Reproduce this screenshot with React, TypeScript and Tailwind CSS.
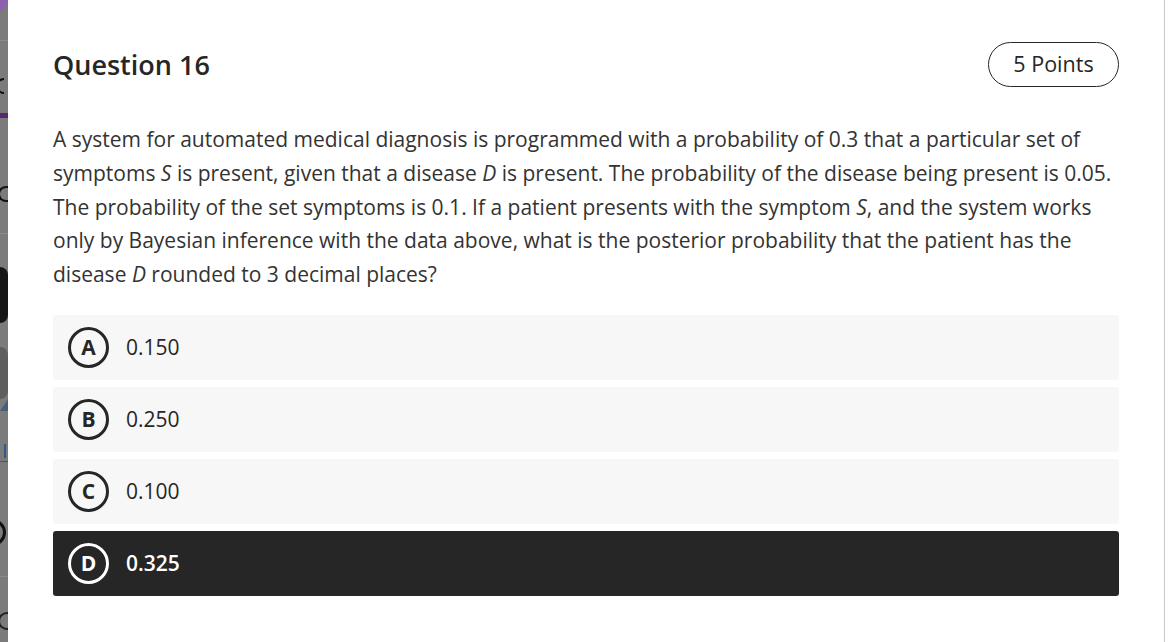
import React from "react";

const font = { fontFamily: '"Open Sans", "Noto Sans", sans-serif' };

function Option({ letter, value, selected }: { letter: string; value: string; selected?: boolean }) {
  return (
    <div
      className={
        "flex h-[65px] items-center rounded-[3px] pl-[15px] " +
        (selected ? "bg-[#262626] text-white" : "bg-[#f7f7f7] text-[#262626]")
      }
    >
      <div
        className={
          "flex h-[41px] w-[41px] items-center justify-center rounded-full border-[3px] text-[21px] font-bold leading-none " +
          (selected ? "border-white" : "border-[#262626]")
        }
      >
        {letter}
      </div>
      <div className={"ml-[17px] text-[21px] " + (selected ? "font-semibold" : "")}>{value}</div>
    </div>
  );
}

function LeftStrip() {
  return (
    <div className="flex h-[642px] w-[8px] shrink-0 flex-col overflow-hidden bg-[#7b7b7b]" style={font}>
      <div className="h-[14px] w-[8px] bg-[linear-gradient(135deg,#8f5fb0_55%,#7b7b7b_55%)]" />
      <div className="h-[26px]" />
      <div className="h-px bg-[#8a8a8a]" />
      <div className="h-[37px]" />
      <div className="h-[16px] w-[8px] overflow-hidden">
        <div className="ml-[-4px] h-[16px] w-[8px] rounded-l-full border-[2px] border-r-0 border-[#111]" />
      </div>
      <div className="h-[19px]" />
      <div className="h-[5px] bg-[#552a6c]" />
      <div className="h-[68px]" />
      <div className="h-[16px] w-[8px] overflow-hidden">
        <div className="ml-[-2px] h-[16px] w-[10px] rounded-l-full border-[2px] border-r-0 border-[#111]" />
      </div>
      <div className="h-[31px]" />
      <div className="h-px bg-[#8a8a8a]" />
      <div className="h-[33px]" />
      <div className="h-[56px] w-[8px] rounded-r-full bg-[#161616]" />
      <div className="h-[24px]" />
      <div className="h-[52px] w-[8px] rounded-r-full bg-[#5e5e5e]" />
      <div className="h-[12px] w-[8px] bg-[#48607e] [clip-path:polygon(0_100%,100%_0,100%_100%)]" />
      <div className="h-[33px]" />
      <div className="h-[18px] border-b border-[#2d5b8a]">
        <div className="ml-[4px] h-[14px] w-[2px] bg-[#2d5b8a]" />
      </div>
      <div className="h-[57px]" />
      <div className="h-[27px] w-[8px] overflow-hidden">
        <div className="ml-[-10px] h-[27px] w-[16px] rounded-r-full border-[3px] border-l-0 border-[#111]" />
      </div>
      <div className="h-[30px]" />
      <div className="h-px bg-[#8a8a8a]" />
      <div className="h-[35px]" />
      <div className="h-[18px] w-[8px] overflow-hidden">
        <div className="ml-[-2px] h-[18px] w-[10px] rounded-l-full border-[2px] border-r-0 border-[#222]" />
      </div>
    </div>
  );
}

export default function App() {
  return (
    <div className="flex h-[642px] w-[1171px] overflow-hidden bg-white" style={font}>
      <LeftStrip />
      <div className="flex-1 border-r border-[#c8c8c8] pl-[45px] pr-[45px] pt-[42px] text-[#262626]">
        <div className="flex items-center justify-between">
          <h1 className="text-[27px] font-semibold leading-none">Question 16</h1>
          <div className="flex h-[45px] w-[131px] items-center justify-center rounded-full border border-[#262626] text-[21.5px]">
            5 Points
          </div>
        </div>
        <p className="mt-[36px] text-[21px] leading-[33.8px] text-[#333]">
          A system for automated medical diagnosis is programmed with a probability of 0.3 that a particular set of
          symptoms <i>S</i> is present, given that a disease <i>D</i> is present. The probability of the disease being
          present is 0.05. The probability of the set symptoms is 0.1. If a patient presents with the symptom <i>S</i>,
          and the system works only by Bayesian inference with the data above, what is the posterior probability that
          the patient has the disease <i>D</i> rounded to 3 decimal places?
        </p>
        <div className="mt-[23px] flex flex-col gap-[7px]">
          <Option letter="A" value="0.150" />
          <Option letter="B" value="0.250" />
          <Option letter="C" value="0.100" />
          <Option letter="D" value="0.325" selected />
        </div>
      </div>
      <div className="w-[6px] shrink-0" />
    </div>
  );
}
